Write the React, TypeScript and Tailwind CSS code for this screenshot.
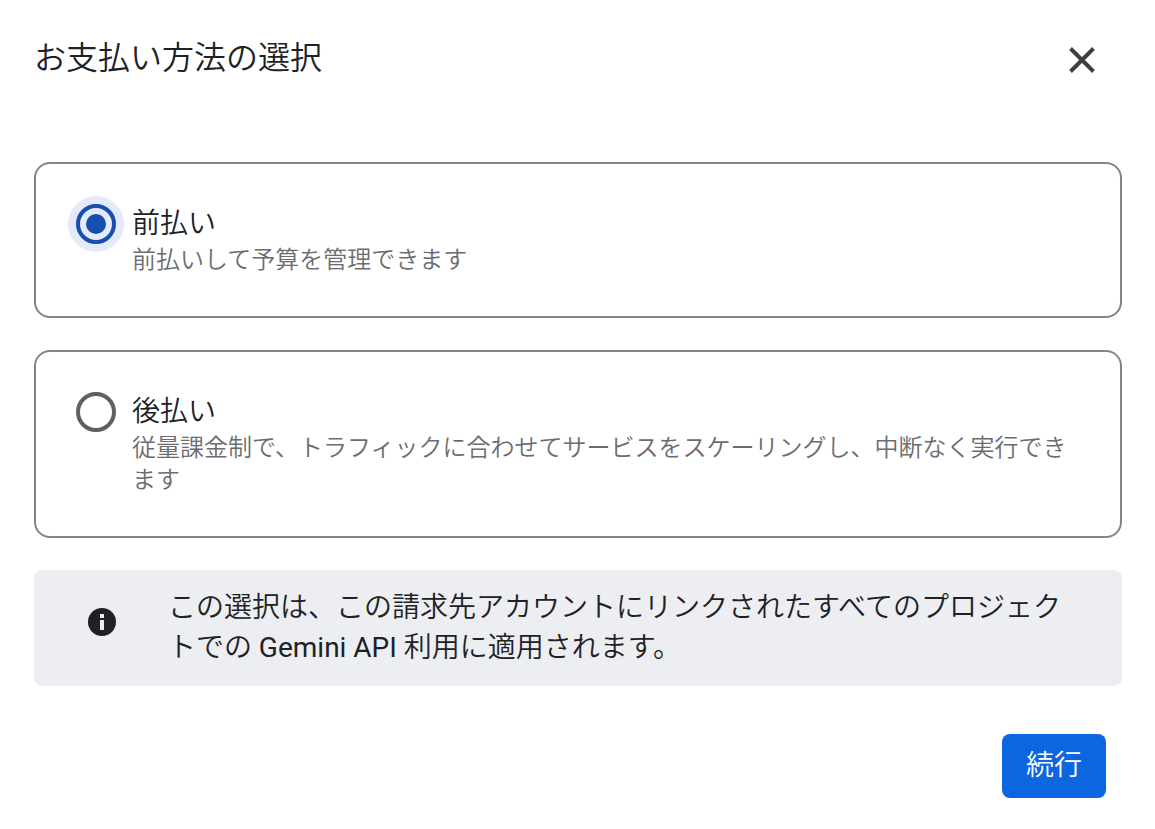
import React, { useState } from 'react';

const options = [
  {
    id: 'prepay',
    title: '前払い',
    description: '前払いして予算を管理できます',
  },
  {
    id: 'postpay',
    title: '後払い',
    description: '従量課金制で、トラフィックに合わせてサービスをスケーリングし、中断なく実行できます',
  },
];

export default function App() {
  const [selected, setSelected] = useState('prepay');

  return (
    <div
      lang="ja"
      className="bg-white text-[#202124] pl-[34px] pr-[33px] pt-9 pb-8 font-[Roboto,'Noto_Sans_CJK_JP',sans-serif] font-[350]"
    >
      {/* Header */}
      <header className="flex items-start justify-between pr-[18px]">
        <h1 className="text-[32px] leading-[44px]">お支払い方法の選択</h1>
        <button type="button" aria-label="閉じる" className="p-0.5 mt-0.5 text-[#3c4043]">
          <CloseIcon />
        </button>
      </header>

      {/* Payment options */}
      <form className="mt-20">
        <div className="space-y-8">
          {options.map((option) => (
            <PaymentOption
              key={option.id}
              {...option}
              checked={selected === option.id}
              onSelect={() => setSelected(option.id)}
            />
          ))}
        </div>

        {/* Notice */}
        <div className="mt-8 flex items-start rounded-lg bg-[#edeef2] pl-[54px] pr-14 py-[18px]">
          <InfoIcon />
          <p className="ml-[52px] text-[28px] leading-10">
            この選択は、この請求先アカウントにリンクされたすべてのプロジェクトでの{' '}
            <span className="font-normal">Gemini API</span> 利用に適用されます。
          </p>
        </div>

        <div className="mt-12 flex justify-end pr-4">
          <button type="button" className="h-16 rounded-lg bg-[#0b66e0] px-6 text-[28px] leading-10 text-white">
            続行
          </button>
        </div>
      </form>
    </div>
  );
}

interface PaymentOptionProps {
  id: string;
  title: string;
  description: string;
  checked: boolean;
  onSelect: () => void;
}

const PaymentOption = ({ id, title, description, checked, onSelect }: PaymentOptionProps) => (
  <label htmlFor={id} className="flex items-start rounded-2xl border-2 border-[#80848c] px-8 pt-8 pb-10 cursor-pointer">
    <span className={`rounded-full p-2 ${checked ? 'bg-[#e4eafb]' : 'bg-transparent'}`}>
      <input
        id={id}
        type="radio"
        name="payment"
        checked={checked}
        onChange={onSelect}
        className="grid size-10 appearance-none place-items-center rounded-full border-4 border-[#5f6066] checked:border-[#1550ae] before:size-5 before:rounded-full checked:before:bg-[#1550ae]"
      />
    </span>
    <span className="ml-2 mr-4">
      <span className="block text-[28px] leading-10 pt-2">{title}</span>
      <span className="block text-2xl leading-8 text-[#6a6c70]">{description}</span>
    </span>
  </label>
);

const CloseIcon = () => (
  <svg width="40" height="40" viewBox="0 0 40 40" fill="none" stroke="currentColor" strokeWidth="4">
    <path d="M8.5 8.5l23 23M31.5 8.5l-23 23" />
  </svg>
);

const InfoIcon = () => (
  <svg width="28" height="28" viewBox="0 0 28 28" className="mt-5 shrink-0">
    <circle cx="14" cy="14" r="14" fill="#202124" />
    <path d="M12 6h4v4h-4zM12 12h4v10h-4z" fill="#edeef2" />
  </svg>
);
